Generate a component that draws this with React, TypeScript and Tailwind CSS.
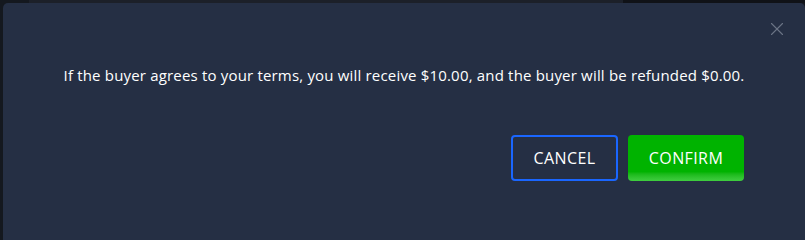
import { X } from "lucide-react"

export default function App() {
  return (
    <div className="h-[240px] w-[805px] overflow-hidden bg-[#14181f] flex flex-col" style={{ fontFamily: '"Open Sans", "Liberation Sans", sans-serif' }}>
      <div className="flex h-[3px] shrink-0">
        <div className="w-[29px] bg-[#14181f]" />
        <div className="w-[594px] bg-[#1c2029]" />
        <div className="flex-1 bg-[#101217]" />
      </div>
      <div className="flex flex-1">
        <div className="w-[3px] shrink-0 bg-[#14181f]" />
        <div className="relative flex-1 h-[260px] rounded-[5px] bg-[#252f44]">
          <button className="absolute right-[17px] top-[15px] text-[#6b7486]">
            <X className="w-[22px] h-[22px]" strokeWidth={1.2} />
          </button>
          <p className="pt-[61px] text-center text-[15px] text-white tracking-[0.18px]">
            If the buyer agrees to your terms, you will receive $10.00, and the buyer will be refunded $0.00.
          </p>
          <div className="mt-[48px] flex justify-end gap-[10px] pr-[61px]">
            <button className="h-[46px] w-[107px] rounded-[4px] border-2 border-[#1a66ff] text-[16px] tracking-[0.4px] text-white">
              CANCEL
            </button>
            <button className="h-[46px] w-[116px] rounded-[4px] bg-gradient-to-b from-[#00b300] from-80% to-[#3fce3f] text-[16px] tracking-[0.4px] text-white">
              CONFIRM
            </button>
          </div>
        </div>
      </div>
    </div>
  )
}
